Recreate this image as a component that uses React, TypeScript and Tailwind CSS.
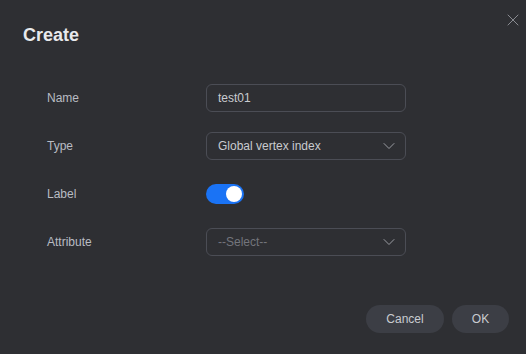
import { ChevronDown, X } from 'lucide-react'

const font = { fontFamily: '"Liberation Sans", Arial, sans-serif' }

function Row({ label, children }: { label: string; children: React.ReactNode }) {
  return (
    <div className="flex items-center h-[28px]">
      <div className="w-[159px] text-[12px] text-[#b9bcc3]">{label}</div>
      <div className="w-[200px]">{children}</div>
    </div>
  )
}

export default function App() {
  return (
    <div className="w-[526px] h-[354px] bg-[#2e2f33] relative" style={font}>
      <button className="absolute right-[3px] top-[10px] text-[#8a8c92]">
        <X size={20} strokeWidth={1.2} />
      </button>

      <h1 className="pl-[23px] pt-[24px] text-[18px] font-bold text-[#e8e9ec] leading-[22px]">Create</h1>

      {/* Form */}
      <div className="pl-[47px] pt-[38px] flex flex-col gap-[20px]">
        <Row label="Name">
          <div className="h-[28px] rounded-[6px] border border-[#4b4d55] flex items-center px-[11px] text-[12px] text-[#c9cbd0]">
            test01
          </div>
        </Row>
        <Row label="Type">
          <div className="h-[28px] rounded-[6px] border border-[#4b4d55] flex items-center justify-between pl-[11px] pr-[6px] text-[12px] text-[#c9cbd0]">
            <span>Global vertex index</span>
            <ChevronDown size={20} strokeWidth={1.2} className="text-[#9a9ca2]" />
          </div>
        </Row>
        <Row label="Label">
          <div className="w-[38px] h-[20px] rounded-full bg-[#1a73f5] flex items-center justify-end pr-[2px]">
            <div className="w-[16px] h-[16px] rounded-full bg-white" />
          </div>
        </Row>
        <Row label="Attribute">
          <div className="h-[28px] rounded-[6px] border border-[#4b4d55] flex items-center justify-between pl-[11px] pr-[6px] text-[12px] text-[#73757c]">
            <span>--Select--</span>
            <ChevronDown size={20} strokeWidth={1.2} className="text-[#9a9ca2]" />
          </div>
        </Row>
      </div>

      {/* Footer */}
      <div className="flex justify-end gap-[8px] pr-[17px] pt-[49px]">
        <button className="w-[78px] h-[28px] rounded-full bg-[#3c3e45] text-[12px] text-[#c9cbd0]">Cancel</button>
        <button className="w-[57px] h-[28px] rounded-full bg-[#3c3e45] text-[12px] text-[#c9cbd0]">OK</button>
      </div>
    </div>
  )
}
